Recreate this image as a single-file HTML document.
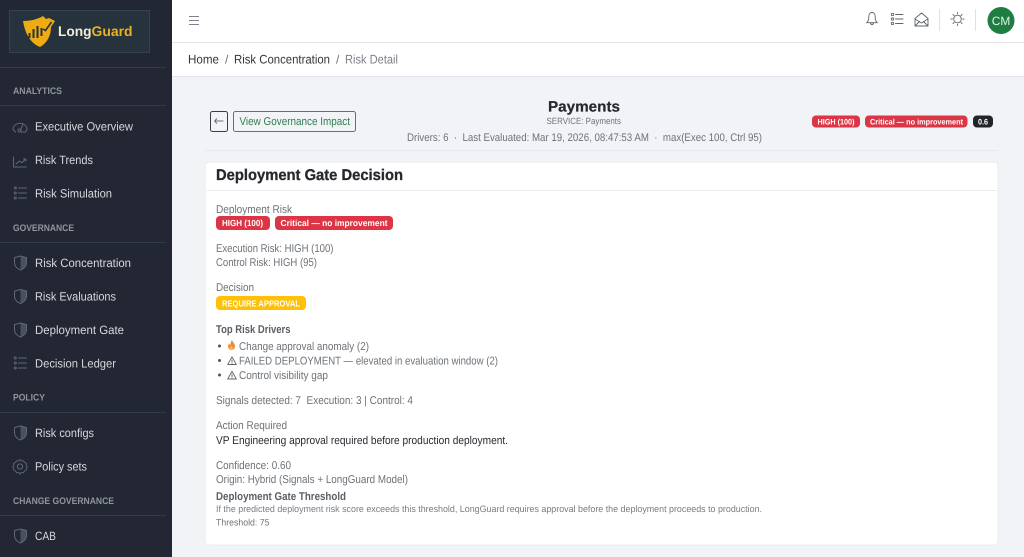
<!DOCTYPE html>
<html lang="en"><head><meta charset="utf-8"><title>LongGuard - Risk Detail</title>
<style>
html,body{margin:0;padding:0;width:1024px;height:557px;overflow:hidden;background:#f1f3f7}
svg{display:block;font-family:"Liberation Sans",sans-serif;filter:blur(.25px);text-rendering:geometricPrecision}
.n{font-size:12px;fill:#d5d8dd}
.h{font-size:9.5px;font-weight:700;fill:#8f949d}
.b{font-size:11.300px;fill:#6d7379}
.s{font-weight:700;fill:#5a5f65}
.bw{font-size:8.8px;font-weight:700;fill:#fff}
.i{fill:none;stroke:#626873;stroke-width:1;stroke-linecap:round;stroke-linejoin:round}
.t{fill:none;stroke:#5f6469;stroke-width:.9;stroke-linecap:round;stroke-linejoin:round}
</style></head><body>
<svg width="1024" height="557" viewBox="0 0 1024 557" xmlns="http://www.w3.org/2000/svg">
<defs>
<g id="shield"><path class="i" d="M0 1.600 6 0l6 1.600v5c0 3.600-2.600 6-6 7.400-3.400-1.400-6-3.800-6-7.400z"/><path d="M6 0l6 1.600v5c0 3.600-2.600 6-6 7.400z" fill="#626873" opacity=".65"/></g>
<g id="list"><path class="i" d="M4.500 1h8M4.500 6h8M4.500 11h8"/><circle class="i" cx="1.300" cy="1" r="1"/><circle class="i" cx="1.300" cy="6" r="1"/><circle class="i" cx="1.300" cy="11" r="1"/></g>
</defs>

<rect width="1024" height="557" fill="#f1f3f7"/>
<!-- sidebar -->
<rect width="172" height="557" fill="#222733"/>
<rect x="9.500" y="10.500" width="140" height="42" fill="#27333c" stroke="#36424b"/>
<path d="M23 21 C31 21 38 19 43 16 L46 19 L49 18 L55 21 L51 27 C51 36 47 43 40 47 C30 43 25 33 23 21z" fill="#eeab12"/>
<path d="M29.500 38v-5M33.500 38v-9M37.500 38v-12M41.500 36v-8" stroke="#27333c" stroke-width="2" fill="none"/>
<path d="M43 29l2.500 1.500 6-8.500" stroke="#27333c" stroke-width="1.600" fill="none"/>
<text x="58" y="36" font-size="14" font-weight="700" fill="#f3eed7" textLength="33.500" lengthAdjust="spacingAndGlyphs">Long</text>
<text x="91.500" y="36" font-size="14" font-weight="700" fill="#e9b022" textLength="41" lengthAdjust="spacingAndGlyphs">Guard</text>
<g stroke="#343a46" fill="none"><path d="M0 67.500h166M0 105.500h166M0 242.500h166M0 412.500h166M0 515.500h166"/></g>

<text class="h" x="13" y="94" textLength="49" lengthAdjust="spacingAndGlyphs">ANALYTICS</text>
<text class="h" x="13" y="231" textLength="61" lengthAdjust="spacingAndGlyphs">GOVERNANCE</text>
<text class="h" x="13" y="400.500" textLength="32" lengthAdjust="spacingAndGlyphs">POLICY</text>
<text class="h" x="13" y="504" textLength="101" lengthAdjust="spacingAndGlyphs">CHANGE GOVERNANCE</text>

<text class="n" x="35" y="130.500" textLength="98" lengthAdjust="spacingAndGlyphs">Executive Overview</text>
<text class="n" x="35" y="164" textLength="58" lengthAdjust="spacingAndGlyphs">Risk Trends</text>
<text class="n" x="35" y="197.500" textLength="77" lengthAdjust="spacingAndGlyphs">Risk Simulation</text>
<text class="n" x="35" y="267" textLength="96" lengthAdjust="spacingAndGlyphs">Risk Concentration</text>
<text class="n" x="35" y="300.500" textLength="81" lengthAdjust="spacingAndGlyphs">Risk Evaluations</text>
<text class="n" x="35" y="334" textLength="89" lengthAdjust="spacingAndGlyphs">Deployment Gate</text>
<text class="n" x="35" y="367.500" textLength="81" lengthAdjust="spacingAndGlyphs">Decision Ledger</text>
<text class="n" x="35" y="437" textLength="59" lengthAdjust="spacingAndGlyphs">Risk configs</text>
<text class="n" x="35" y="470.500" textLength="52" lengthAdjust="spacingAndGlyphs">Policy sets</text>
<text class="n" x="35" y="540" textLength="21" lengthAdjust="spacingAndGlyphs">CAB</text>

<g class="i"><path d="M15.500 132c-1.500-1-2.500-2.500-2.500-4a7.500 7.500 0 0 1 14 0c0 1.500-.5 3-1.500 4h-4M20.500 130l2.500-6"/><circle cx="19.500" cy="130.500" r="1.500"/></g>
<path class="i" d="M13.500 157v10H26.500M16 164l3.500-3 2.500 1.800 3.500-3.800M23.500 159h2.300v2.300"/>
<use href="#list" x="14" y="187"/>
<use href="#shield" x="14.500" y="256"/>
<use href="#shield" x="14.500" y="289.500"/>
<use href="#shield" x="14.500" y="323"/>
<use href="#list" x="14" y="357"/>
<use href="#shield" x="14.500" y="426"/>
<g class="i"><path d="M20 458.500l1.500 2 2.500-.5 1 2 2.300 1-.3 2.300 1.500 1.700-1.500 1.700.3 2.300-2.300 1-1 2-2.500-.5-1.500 2-1.500-2-2.500.5-1-2-2.300-1 .3-2.300-1.500-1.700 1.500-1.700-.3-2.300 2.300-1 1-2 2.500.5z" transform="translate(2.600 60.500) scale(.87)"/><circle cx="20" cy="466.500" r="2.600"/></g>
<use href="#shield" x="14.500" y="529"/>

<!-- header -->
<rect x="172" width="852" height="42" fill="#fff"/>
<rect x="172" y="42" width="852" height="1" fill="#e3e5e9"/>
<path d="M189 16.500h10M189 20.500h10M189 24.500h10" stroke="#7d8288" fill="none"/>
<g class="t">
<path d="M868 21c.6-1 .8-2 .8-4.500 0-2.600 1.400-4 3.200-4s3.200 1.400 3.200 4c0 2.500.2 3.500.8 4.500l1.300 1.700h-10.600zM870.500 23c0 2 3 2 3 0"/>
</g>
<g class="t"><path d="M895.500 14.500h7.500M895.500 19h7.500M895.500 23.500h7.500"/><circle cx="892.500" cy="14.500" r="1.200"/><circle cx="892.500" cy="19" r="1.200"/><circle cx="892.500" cy="23.500" r="1.200"/></g>
<g class="t"><path d="M915 18.500 921.500 13l6.500 5.500V26h-13zM915 19l6.500 4 6.500-4M915 26l4.500-4.500M928 26l-4.500-4.500"/></g>
<rect x="939" y="9" width="1" height="22" fill="#dfe1e5"/>
<g class="t"><circle cx="957.500" cy="19" r="3.800"/><path d="M957.500 12.500v1.300M957.500 24.200v1.300M951 19h1.300M962.700 19h1.300M953 14.500l1 1M961 22.500l1 1M953 23.500l1-1M961 15.500l1-1"/></g>
<rect x="975" y="9" width="1" height="22" fill="#dfe1e5"/>
<circle cx="1001" cy="20.500" r="13.500" fill="#1e7d41"/>
<text x="991.800" y="25" font-size="12" fill="#e6f1ea" textLength="18.500" lengthAdjust="spacingAndGlyphs">CM</text>

<!-- breadcrumb -->
<rect x="172" y="43" width="852" height="33" fill="#fff"/>
<rect x="172" y="76" width="852" height="1" fill="#e2e4ea"/>
<text x="188" y="63.500" font-size="12.500" fill="#33373b" textLength="31" lengthAdjust="spacingAndGlyphs">Home</text>
<text x="225" y="63.500" font-size="12" fill="#6d7278">/</text>
<text x="234" y="63.500" font-size="12.500" fill="#33373b" textLength="96" lengthAdjust="spacingAndGlyphs">Risk Concentration</text>
<text x="336" y="63.500" font-size="12" fill="#6d7278">/</text>
<text x="345" y="63.500" font-size="12.500" fill="#7d8288" textLength="53" lengthAdjust="spacingAndGlyphs">Risk Detail</text>

<!-- page header -->
<rect x="210.500" y="111.500" width="17" height="20" rx="2" fill="none" stroke="#3a3f45"/>
<path d="M214.500 121h9M214.500 121l2.500-2.500M214.500 121l2.500 2.500" stroke="#6d7278" fill="none"/>
<rect x="233.500" y="111.500" width="122" height="20" rx="2" fill="none" stroke="#3b8a5e"/>
<text x="239.500" y="125" font-size="11.300" fill="#2f7f52" textLength="110.500" lengthAdjust="spacingAndGlyphs">View Governance Impact</text>
<text x="548" y="111.500" font-size="15" font-weight="700" fill="#25282c" stroke="#25282c" stroke-width=".2" textLength="72" lengthAdjust="spacingAndGlyphs">Payments</text>
<text x="546.500" y="124" font-size="9" fill="#6d7379" textLength="74.500" lengthAdjust="spacingAndGlyphs">SERVICE: Payments</text>
<text x="407" y="141" font-size="11" fill="#6d7379" textLength="355" lengthAdjust="spacingAndGlyphs">Drivers: 6 &#160;·&#160; Last Evaluated: Mar 19, 2026, 08:47:53 AM &#160;·&#160; max(Exec 100, Ctrl 95)</text>
<rect x="812" y="115.500" width="48" height="12" rx="4" fill="#dc3545"/>
<text class="bw" x="817.500" y="124.500" textLength="37" lengthAdjust="spacingAndGlyphs" style="font-size:8px">HIGH (100)</text>
<rect x="865" y="115.500" width="102.500" height="12" rx="4" fill="#dc3545"/>
<text class="bw" x="870" y="124.500" textLength="93" lengthAdjust="spacingAndGlyphs" style="font-size:8px">Critical — no improvement</text>
<rect x="973" y="115.500" width="20" height="12" rx="4" fill="#212529"/>
<text class="bw" x="978" y="124.500" textLength="10" lengthAdjust="spacingAndGlyphs" style="font-size:8px">0.6</text>
<rect x="205" y="150" width="793" height="1" fill="#e7e9ed"/>

<!-- card -->
<rect x="205" y="162" width="793" height="383" rx="4" fill="#fff" stroke="#e9ebef"/>
<rect x="206" y="190" width="791" height="1" fill="#e9ebef"/>
<text x="216" y="180" font-size="15.500" font-weight="700" fill="#25282c" stroke="#25282c" stroke-width=".3" textLength="187" lengthAdjust="spacingAndGlyphs">Deployment Gate Decision</text>

<text class="b" x="216" y="213" textLength="76" lengthAdjust="spacingAndGlyphs">Deployment Risk</text>
<rect x="216" y="216" width="54" height="14" rx="4" fill="#dc3545"/>
<text class="bw" x="222" y="226" textLength="41" lengthAdjust="spacingAndGlyphs">HIGH (100)</text>
<rect x="275" y="216" width="118" height="14" rx="4" fill="#dc3545"/>
<text class="bw" x="280.500" y="226" textLength="107" lengthAdjust="spacingAndGlyphs">Critical — no improvement</text>

<text class="b" x="216" y="252" textLength="117.500" lengthAdjust="spacingAndGlyphs">Execution Risk: HIGH (100)</text>
<text class="b" x="216" y="266" textLength="101" lengthAdjust="spacingAndGlyphs">Control Risk: HIGH (95)</text>
<text class="b" x="216" y="291" textLength="38" lengthAdjust="spacingAndGlyphs">Decision</text>
<rect x="216" y="296" width="90" height="14" rx="4" fill="#ffc107"/>
<text class="bw" x="222" y="306.500" textLength="78" lengthAdjust="spacingAndGlyphs">REQUIRE APPROVAL</text>

<text class="b s" x="216" y="333" textLength="74.500" lengthAdjust="spacingAndGlyphs">Top Risk Drivers</text>
<circle cx="219.500" cy="346" r="1.500" fill="#555"/>
<circle cx="219.500" cy="360.500" r="1.500" fill="#555"/>
<circle cx="219.500" cy="375" r="1.500" fill="#555"/>
<path d="M232 340c.5 2 3 3.500 3 6.500a3.500 3.500 0 0 1-7 0c0-1.500.7-2.300 1.300-3 .2 1 .6 1.300 1 1.300.5-1.500.3-3.300 1.700-4.800z" fill="#ef8a3c"/>
<path d="M230.500 350.300c1.500 0 2.300-1 2.300-2 0-.8-1-1.800-1.500-2.500-.5 1-1.600 1.500-1.600 2.700 0 1 .3 1.800.8 1.800z" fill="#f7c04a"/>
<text class="b" x="239" y="350" textLength="130" lengthAdjust="spacingAndGlyphs">Change approval anomaly (2)</text>
<path class="t" d="M232 356.800l-4.300 7.700h8.600zM232 359.800v2.300M232 363.200v.2" stroke-width=".8"/>
<text class="b" x="239" y="364.500" textLength="259" lengthAdjust="spacingAndGlyphs">FAILED DEPLOYMENT — elevated in evaluation window (2)</text>
<path class="t" d="M232 371.300l-4.300 7.700h8.600zM232 374.300v2.300M232 377.700v.2" stroke-width=".8"/>
<text class="b" x="239" y="379" textLength="89" lengthAdjust="spacingAndGlyphs">Control visibility gap</text>
<text class="b" x="216" y="404" textLength="197" lengthAdjust="spacingAndGlyphs">Signals detected: 7 &#160;Execution: 3 | Control: 4</text>
<text class="b" x="216" y="429" textLength="71" lengthAdjust="spacingAndGlyphs">Action Required</text>
<text class="b" x="216" y="444" textLength="292" lengthAdjust="spacingAndGlyphs" style="fill:#272b30">VP Engineering approval required before production deployment.</text>
<text class="b" x="216" y="469" textLength="75" lengthAdjust="spacingAndGlyphs">Confidence: 0.60</text>
<text class="b" x="216" y="483" textLength="192" lengthAdjust="spacingAndGlyphs">Origin: Hybrid (Signals + LongGuard Model)</text>
<text class="b s" x="216" y="500" textLength="130" lengthAdjust="spacingAndGlyphs">Deployment Gate Threshold</text>
<text x="216" y="512" font-size="9.300" fill="#777c82" textLength="546" lengthAdjust="spacingAndGlyphs">If the predicted deployment risk score exceeds this threshold, LongGuard requires approval before the deployment proceeds to production.</text>
<text x="216" y="525.500" font-size="9.300" fill="#6d7379" textLength="53.500" lengthAdjust="spacingAndGlyphs">Threshold: 75</text>
</svg>
</body></html>
